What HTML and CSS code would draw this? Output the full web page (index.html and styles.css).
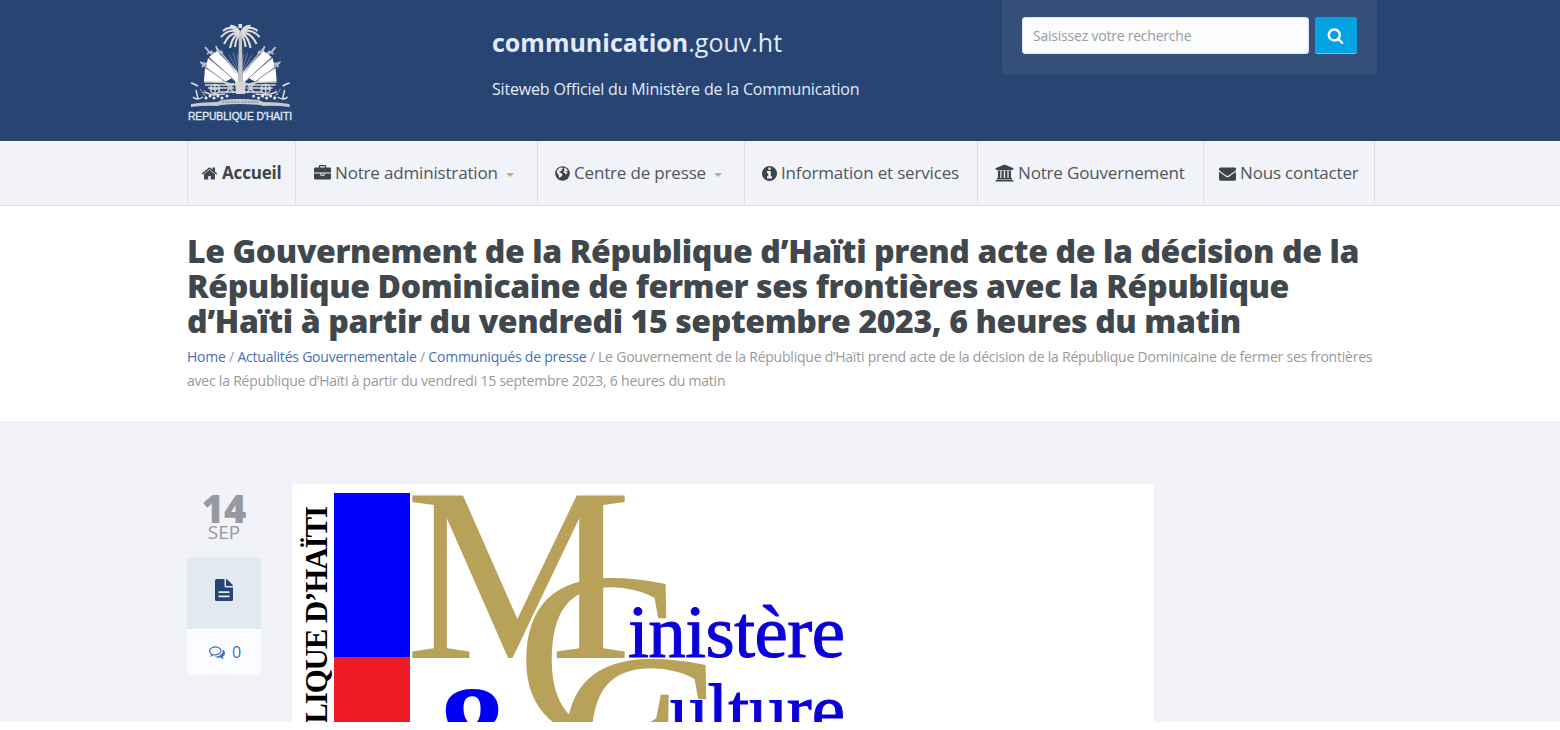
FILE: index.html
```html
<!DOCTYPE html>
<html lang="fr">
<head>
  <meta charset="UTF-8" />
  <meta name="viewport" content="width=device-width, initial-scale=1.0"/>
  <title>Ministère de la Communication</title>
  <link rel="stylesheet" href="styles.css">
</head>
<body>
  <header class="header">
    <div class="container header-inner">
      <a class="logo" href="#">
        <svg width="105" height="104" viewBox="0 0 105 104">
          <defs>
            <g id="half">
              <g stroke="#b9bcc6" stroke-width="1.3" fill="none">
                <path d="M13 43L36 62M18 28L46 60M29 28L49 52"/>
                <path stroke-width="1.8" d="M12 42l6 2 3-2M17 27l4 5 5 1M28 26l2 6 5 1M14 47l4-4M19 34l5-3M29 34l5-3"/>
              </g>
              <path d="M17 48L34 59 34 63 16 61z" fill="#fff"/>
              <path d="M20 38L44 58 37 62 18 47z" fill="#fff"/>
              <path d="M29 31L50 53 50 64 45 59 21 37z" fill="#fff"/>
              <path d="M18 47.5L38 62M21 37.5L46 60" stroke="#8d96ac" stroke-width="1"/>
              <path d="M50 52L41 35M50 49L45 33M51 47L49 34M48 53L37 38" stroke="#8192b4" stroke-width=".7"/>
              <g stroke="#d9d8d6" fill="none" stroke-width="1.4">
                <path d="M16 62h18l14 3M17 65h28M20 68h26M30 72h20"/>
                <circle cx="27" cy="69" r="4.5"/>
                <path d="M27 64v10M22 69h10M16 72l9 3 12-1M38 63l8 10M46 63l-8 10"/>
              </g>
              <path d="M3 63l3 1 4 2M8 70l2 9M5 77q4 4 10 0" stroke="#e4e6eb" stroke-width="1.4" fill="none"/>
              <path d="M12 69l6 8M17 70l-2 5" stroke="#9ea6b8" fill="none"/>
              <g fill="#edeef1">
                <circle cx="18" cy="78" r="1.5"/><circle cx="22" cy="76" r="1.5"/><circle cx="26" cy="78" r="1.5"/>
                <circle cx="30" cy="76" r="1.5"/><circle cx="34" cy="78" r="1.5"/><circle cx="39" cy="76" r="1.5"/>
              </g>
              <path d="M3 84q12-2 26-2l5-2q8-1 19-1v5q-11 0-20 1l-4 1q-12-1-26 1z" fill="#c9cad0"/>
              <path d="M34 82h18" stroke="#697894" stroke-dasharray="2 1"/>
              <!-- palm leaves -->
              <g stroke="#dedddb" stroke-width="2.1" fill="none">
                <path d="M52 13Q43 4 35 11M52 13Q42 7 33 17M52 14Q43 10 36 24M52 14Q45 14 42 28M52 14Q48 18 47 27M52 13Q48 5 42 6"/>
              </g>
            </g>
          </defs>
          <use href="#half"/>
          <use href="#half" transform="translate(104.6 0) scale(-1 1)"/>
          <path d="M51 12h2.8l1 51h-4.8z" fill="#c8c6c4"/>
          <path d="M50.5 4h3.5v4h-3.5z" fill="#dfe5ef"/>
          <path d="M47 62h11l-1 12h-9z" fill="#d8d7d4"/>
          <text class="logo-text" x="0" y="100" textLength="104">REPUBLIQUE D'HAITI</text>
        </svg>
      </a>
      <div class="site-name">
        <div class="site-title"><b>communication</b>.gouv.ht</div>
        <div class="site-desc">Siteweb Officiel du Ministère de la Communication</div>
      </div>
      <form class="search">
        <input class="search-input" type="text" placeholder="Saisissez votre recherche">
        <button class="search-btn" type="button">
          <svg width="17" height="17" viewBox="0 0 1792 1792"><path fill="#fff" d="M1216 832q0-185-131.5-316.5t-316.5-131.5-316.5 131.5-131.5 316.5 131.5 316.5 316.5 131.5 316.5-131.5 131.5-316.5zm512 832q0 52-38 90t-90 38q-54 0-90-38l-343-342q-179 124-399 124-143 0-273.5-55.5t-225-150-150-225-55.5-273.5 55.5-273.5 150-225 225-150 273.5-55.5 273.5 55.5 225 150 150 225 55.5 273.5q0 220-124 399l343 343q37 37 37 90z"/></svg>
        </button>
      </form>
    </div>
  </header>

  <nav class="nav">
    <div class="container nav-inner">
      <a class="nav-item active" href="#">
        <svg width="17" height="17" viewBox="0 0 1792 1792"><path d="M1472 992v480q0 26-19 45t-45 19h-384v-384h-256v384h-384q-26 0-45-19t-19-45v-480q0-1 .5-3t.5-3l575-474 575 474q1 2 1 6zm223-69l-62 74q-8 9-21 11h-3q-13 0-21-7l-692-577-692 577q-12 8-24 7-13-2-21-11l-62-74q-8-10-7-23.5t11-21.5l719-599q32-26 76-26t76 26l244 204v-195q0-14 9-23t23-9h192q14 0 23 9t9 23v408l219 182q10 8 11 21.5t-7 23.5z"/></svg>
        <span>Accueil</span>
      </a>
      <a class="nav-item" href="#">
        <svg width="17" height="17" viewBox="0 0 1792 1792"><path d="M640 256h512v-128h-512v128zm1152 640v480q0 66-47 113t-113 47h-1472q-66 0-113-47t-47-113v-480h672v160q0 26 19 45t45 19h320q26 0 45-19t19-45v-160h672zm-768 0v128h-256v-128h256zm768-480v384h-1792v-384q0-66 47-113t113-47h352v-160q0-40 28-68t68-28h576q40 0 68 28t28 68v160h352q66 0 113 47t47 113z"/></svg>
        <span>Notre administration</span>
        <i class="caret"></i>
      </a>
      <a class="nav-item" href="#">
        <svg width="15" height="15" viewBox="0 0 15 15"><circle cx="7.5" cy="7.5" r="7.3"/><path fill="#f2f3f8" d="M4.6 1.7l2.4-.2 1.2.8-1.6.9.9.8-1.7 1.3-1.6.3.2 1 1.8.5 1.3 1.5-.5 1.5-1.6 1-.5 1.2-1.2-1.9-.1-1.9-1.5-1.2-.3-1.7.9-2zM9.5 1.500l2.300 1.400 1.300 2-1.600-.2-.8.9 1.900.6-.8 1.600-1.100.4-1.300-1.400-1-.2.4-1.500 1.100-1-.9-.9z"/></svg>
        <span>Centre de presse</span>
        <i class="caret"></i>
      </a>
      <a class="nav-item" href="#">
        <svg width="15" height="15" viewBox="128 128 1536 1536"><path d="M1152 1376v-160q0-14-9-23t-23-9h-96v-512q0-14-9-23t-23-9h-320q-14 0-23 9t-9 23v160q0 14 9 23t23 9h96v320h-96q-14 0-23 9t-9 23v160q0 14 9 23t23 9h448q14 0 23-9t9-23zm-128-896v-160q0-14-9-23t-23-9h-192q-14 0-23 9t-9 23v160q0 14 9 23t23 9h192q14 0 23-9t9-23zm640 416q0 209-103 385.5t-279.5 279.5-385.5 103-385.5-103-279.5-279.5-103-385.5 103-385.5 279.5-279.5 385.5-103 385.5 103 279.5 279.5 103 385.5z"/></svg>
        <span>Information et services</span>
      </a>
      <a class="nav-item" href="#">
        <svg width="19" height="18" viewBox="0 0 19 18"><path d="M9.5.5l9 3.7v1.2h-1.2v.8H1.7v-.8H.5V4.2zM3 6.8h2.3v7.2h1.2V6.8h2.3v7.2h1.3V6.8h2.3v7.2h1.2V6.8H16v7.2h1v1.2H2V14h1zM1.3 15.7h16.4v.7h.9v1.2H.4v-1.2h.9z"/></svg>
        <span>Notre Gouvernement</span>
      </a>
      <a class="nav-item" href="#">
        <svg width="17" height="17" viewBox="0 0 1792 1792"><path d="M1792 710v794q0 66-47 113t-113 47h-1472q-66 0-113-47t-47-113v-794q44 49 101 87 362 246 497 345 57 42 92.5 65.5t94.5 48 110 24.5h2q51 0 110-24.5t94.5-48 92.5-65.5q170-123 498-345 57-39 100-87zm0-294q0 79-49 151t-122 123q-376 261-468 325-10 7-42.5 31t-54 38.5-52 32.5-57.5 27-50 9h-2q-23 0-50-9t-57.5-27-52-32.5-54-38.5-42.5-31q-91-64-262-182.5t-205-142.5q-62-42-117-115.5t-55-136.5q0-78 41.5-130t118.5-52h1472q65 0 112.5 47t47.5 113z"/></svg>
        <span>Nous contacter</span>
      </a>
    </div>
  </nav>

  <section class="page-head">
    <div class="container">
      <h1>Le Gouvernement de la République d’Haïti prend acte de la décision de la<br>République Dominicaine de fermer ses frontières avec la République<br>d’Haïti à partir du vendredi 15 septembre 2023, 6 heures du matin</h1>
      <div class="breadcrumb"><a href="#">Home</a> / <a href="#">Actualités Gouvernementale</a> / <a href="#">Communiqués de presse</a> / Le Gouvernement de la République d’Haïti prend acte de la décision de la République Dominicaine de fermer ses frontières<br>avec la République d’Haïti à partir du vendredi 15 septembre 2023, 6 heures du matin</div>
    </div>
  </section>

  <main class="content">
    <div class="container post">
      <aside class="meta">
        <div class="day">14</div>
        <div class="month">SEP</div>
        <div class="type">
          <svg width="18" height="22" viewBox="0 0 18 22"><path fill="#284472" fill-rule="evenodd" d="M1.5 0H9.5v7q0 1.5 1.5 1.5h7v12q0 1.5-1.5 1.5h-15Q0 22 0 20.5v-19Q0 0 1.500 0zM11 0q.8.1 1.300.6l5 5q.6.5.7 1.400h-7zM3.500 12.200v1.700h11v-1.700zM3.500 16.500v1.700h11v-1.700z"/></svg>
        </div>
        <a class="comments" href="#">
          <svg width="16" height="16" viewBox="0 0 1792 1792"><path fill="#4470b8" d="M704 384q-153 0-286 52t-211.5 141-78.5 191q0 82 53 158t149 132l97 56-35 84q34-20 62-39l44-31 53 10q78 14 153 14 153 0 286-52t211.5-141 78.5-191-78.5-191-211.5-141-286-52zm0-128q191 0 353.5 68.5t256.5 186.5 94 257-94 257-256.5 186.5-353.5 68.5q-86 0-176-16-124 88-278 128-36 9-86 16h-3q-11 0-20.5-8t-11.5-21q-1-3-1-6.5t.5-6.5 2-6l2.5-5 3.5-5.5 4-5 4.5-5 4-4.5q5-6 23-25t26-29.5 22.5-29 25-38.5 20.5-44q-124-72-195-177t-71-224q0-139 94-257t256.5-186.5 353.5-68.5zm822 1169q10 24 20.5 44t25 38.5 22.5 29 26 29.5 23 25q1 1 4 4.5t4.5 5 4 5 3.5 5.5l2.5 5 2 6 .5 6.5-1 6.5q-3 14-13 22t-22 7q-50-7-86-16-154-40-278-128-90 16-176 16-271 0-472-132 58 4 88 4 161 0 309-45t264-129q125-92 192-212t67-254q0-77-23-152 129 71 204 178t75 230q0 120-71 224.5t-195 176.5z"/></svg>
          <span>0</span>
        </a>
      </aside>
      <div class="picture">
        <svg width="862" height="238" viewBox="0 0 862 238">
          <text class="side" transform="translate(35 339) rotate(-90)" textLength="317">RÉPUBLIQUE D’HAÏTI</text>
          <rect x="42" y="9" width="76" height="164" fill="#0000fe"/>
          <rect x="42" y="173" width="76" height="65" fill="#ed1c24"/>
          <g class="gold">
            <text transform="translate(113 174) scale(1.03 1)" font-size="248">M</text>
            <text transform="translate(224 253) scale(1.04 1)" font-size="240">C</text>
            <text transform="translate(264 334) scale(1.04 1)" font-size="240">C</text>
          </g>
          <text class="amp" x="132" y="303">&amp;</text>
          <text class="word" x="336" y="173" textLength="217">inistère</text>
          <text class="word" x="378" y="251" textLength="175">ulture</text>
        </svg>
      </div>
    </div>
  </main>
</body>
</html>
```
FILE: styles.css
```css
* {
  box-sizing: border-box;
}

body {
  margin: 0;
  background: #fff;
  font-family: "Open Sans", "Noto Sans", sans-serif;
  color: #40484d;
  overflow: hidden;
}

a {
  text-decoration: none;
  color: #4470b8;
}

.container {
  width: 1190px;
  margin-left: 187px;
}

/* header */
.header {
  height: 141px;
  background: #284472;
}

.header-inner {
  display: flex;
}

.logo {
  width: 305px;
  padding: 20px 0 0 1px;
}

.logo svg {
  display: block;
}

.logo-text {
  font-family: "Liberation Sans", sans-serif;
  font-size: 10.3px;
  fill: #e3ebf8;
  stroke: #e3ebf8;
  stroke-width: .3px;
}

.site-name {
  width: 510px;
  padding-top: 25px;
  color: #e1ebfa;
}

.site-title {
  font-size: 25px;
  line-height: 34px;
}

.site-desc {
  margin-top: 18px;
  font-size: 16px;
  line-height: 24px;
  letter-spacing: -.17px;
}

.search {
  display: flex;
  gap: 6px;
  width: 375px;
  height: 75px;
  padding: 17px 20px 0;
  background: #344f79;
  border-radius: 0 0 5px 5px;
}

.search-input {
  width: 287px;
  height: 37px;
  padding: 0 10px;
  border: 1px solid #dfe3eb;
  border-radius: 3px;
  background: #fbfcfe;
  font: 14px "Open Sans", sans-serif;
  letter-spacing: -.22px;
}

.search-input::placeholder {
  color: #999ca1;
}

.search-btn {
  display: flex;
  align-items: center;
  justify-content: center;
  width: 42px;
  height: 37px;
  padding: 0 2px 0 0;
  border: 0;
  border-bottom: 1px solid #6fc3ea;
  border-radius: 3px;
  background: #03a2e3;
}

/* menu */
.nav {
  height: 65px;
  background: #f2f3f8;
  border-bottom: 1px solid #dcdee4;
}

.nav-inner {
  display: grid;
  grid-template-columns: 108px 242px 207px 233px 226px 172px;
  height: 64px;
}

.nav-item {
  display: flex;
  align-items: center;
  gap: 4px;
  padding: 0 0 0 17px;
  border-left: 1px solid #dfe1e7;
  font-size: 17px;
  line-height: 22px;
  letter-spacing: -.17px;
  color: #50575c;
  white-space: nowrap;
}

.nav-item:nth-child(2) {
  padding-left: 18px;
}

.nav-item:last-child {
  padding-left: 15px;
  border-right: 1px solid #dfe1e7;
}

.nav-item svg {
  fill: #3d454b;
  flex: none;
}

.nav-item.active {
  padding-left: 13px;
  font-weight: 700;
  color: #3d454b;
}

.caret {
  margin: 3px 0 0 4px;
  border: 4px solid transparent;
  border-top-color: #adb0b4;
  border-bottom: 0;
}

/* title */
.page-head {
  height: 215px;
  padding-top: 27px;
}

h1 {
  margin: 0 0 7px;
  font-size: 32px;
  line-height: 35px;
  font-weight: 800;
  letter-spacing: -.39px;
  white-space: nowrap;
}

.breadcrumb {
  font-size: 14px;
  line-height: 24px;
  letter-spacing: -.222px;
  color: #97999d;
  white-space: nowrap;
}

/* post */
.content {
  height: 301px;
  padding-top: 63px;
  background: #f2f3f8;
  overflow: hidden;
}

.post {
  display: flex;
  gap: 31px;
}

.meta {
  width: 74px;
  padding-top: 4px;
  text-align: center;
  color: #96999f;
}

.day {
  font-size: 38px;
  line-height: 40px;
  font-weight: 800;
}

.month {
  font-size: 19px;
  line-height: 20px;
  margin-top: -6px;
}

.type {
  display: flex;
  align-items: center;
  justify-content: center;
  height: 72px;
  margin-top: 15px;
  padding-bottom: 7px;
  background: #e1e9f1;
  border-radius: 4px 4px 0 0;
}

.comments {
  display: flex;
  align-items: center;
  justify-content: center;
  gap: 7px;
  height: 45px;
  padding-left: 2px;
  background: #fbfcff;
  border-radius: 0 0 4px 4px;
  font-size: 16px;
}

.picture {
  width: 862px;
  height: 238px;
  background: #fff;
}

.picture svg {
  display: block;
}

.picture text {
  font-family: "Liberation Serif", serif;
}

.side {
  font-size: 31px;
  font-weight: 700;
}

.gold {
  fill: #b8a159;
}

.amp {
  font-size: 146px;
  font-weight: 700;
  fill: #0000f0;
}

.word {
  font-size: 75px;
  fill: #0a00d8;
  stroke: #0a00d8;
  stroke-width: 1px;
}
```
